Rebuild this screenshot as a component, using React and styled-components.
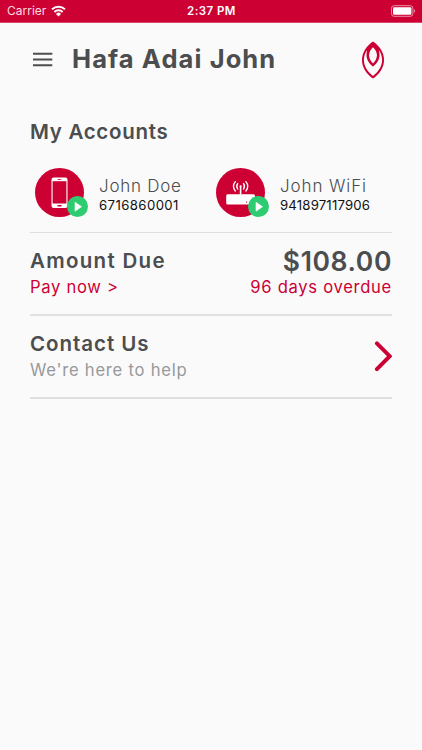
import React from 'react';
import styled, { createGlobalStyle } from 'styled-components';

const GlobalStyle = createGlobalStyle`
    * {
        box-sizing: border-box;
    }
    body {
        margin: 0;
        background-color: #fafafa;
        font-family: Inter, 'Liberation Sans', sans-serif;
        color: #4b4d4f;
    }
`;

const Screen = styled.div`
    min-height: 750px;
    background-color: #fafafa;
`;

const StatusBar = styled.div`
    display: grid;
    grid-template-columns: 1fr auto 1fr;
    align-items: center;
    height: 23px;
    padding: 0 6px 0 7px;
    background-color: #cc0033;
    border-bottom: 1px solid #d6476a;
    color: #fff;
    font-size: 12px;
    line-height: 22px;
`;

const Carrier = styled.div`
    display: flex;
    align-items: center;
    gap: 5px;
    color: #f9dce3;
`;

const Clock = styled.div`
    font-weight: 600;
    font-size: 11.5px;
    letter-spacing: 0.45px;
`;

const Battery = styled.div`
    display: flex;
    justify-content: flex-end;
`;

const Header = styled.header`
    display: flex;
    align-items: center;
    height: 72px;
    padding: 1px 37px 0 33px;
`;

const MenuButton = styled.button`
    display: flex;
    padding: 0;
    margin: 0 19px 0 0;
    border: none;
    background: none;
`;

const Title = styled.h1`
    flex: 1;
    margin: 0 0 1px;
    font-size: 25.5px;
    font-weight: 700;
    line-height: 32px;
    letter-spacing: 1.1px;
    white-space: nowrap;
`;

const Content = styled.main`
    padding: 24px 30px 0;
`;

const Heading = styled.h2`
    margin: 0;
    font-size: 20.5px;
    font-weight: 600;
    line-height: 26px;
    letter-spacing: ${(props) => props.$spacing || '0.7px'};
    white-space: nowrap;
`;

const Accounts = styled.div`
    display: grid;
    grid-template-columns: 181px 181px;
    padding: 23px 0 15px 5px;
    border-bottom: 1px solid #dedede;
`;

const Account = styled.div`
    display: flex;
    align-items: center;
    height: 49px;
`;

const Avatar = styled.div`
    position: relative;
    display: flex;
    width: 49px;
    height: 49px;
    margin-right: 15px;
    border-radius: 50%;
    background-color: #cc0033;
`;

const Badge = styled.svg`
    position: absolute;
    left: 32px;
    top: 28px;
`;

const AccountText = styled.div`
    padding-top: 5px;
    white-space: nowrap;
`;

const AccountName = styled.div`
    font-size: 17px;
    font-weight: 300;
    line-height: 20px;
    letter-spacing: ${(props) => props.$spacing};
`;

const AccountNumber = styled.div`
    color: #111;
    font-size: 13.2px;
    line-height: 18px;
    letter-spacing: ${(props) => props.$spacing};
`;

const Section = styled.section`
    display: flex;
    justify-content: space-between;
    align-items: center;
    height: 83px;
    border-bottom: 2px solid #e0e0e1;
`;

const Side = styled.div`
    text-align: ${(props) => (props.$right ? 'right' : 'left')};
`;

const Amount = styled.div`
    font-size: 26.5px;
    font-weight: 600;
    line-height: 26px;
    letter-spacing: 0.6px;
`;

const Note = styled.div`
    color: ${(props) => props.$color};
    font-size: 16.6px;
    line-height: 26px;
    letter-spacing: ${(props) => props.$spacing || '0.7px'};
    white-space: nowrap;
`;

const WifiIcon = () => (
  <svg width="15" height="12" viewBox="0 0 15 12" fill="none" stroke="#fff" strokeWidth="2">
    <path d="M1 4.4a9.2 9.2 0 0 1 13 0" />
    <path d="M3.4 7a5.8 5.8 0 0 1 8.2 0" />
    <path d="M7.5 11.4L5 8.9a3.5 3.5 0 0 1 5 0z" fill="#fff" stroke="none" />
  </svg>
);

const BatteryIcon = () => (
  <svg width="25" height="12" viewBox="0 0 25 12">
    <rect x="0.5" y="0.7" width="21.4" height="10.6" rx="2.6" fill="none" stroke="#ea91a7" />
    <rect x="2" y="2.2" width="18.4" height="7.6" rx="1.3" fill="#fff" />
    <path d="M23 4.2c1.6.6 1.6 3 0 3.6z" fill="#ea91a7" />
  </svg>
);

const MenuIcon = () => (
  <svg width="20" height="15" viewBox="0 0 20 15" stroke="#4b4d4f" strokeWidth="1.9">
    <path d="M0 1.7h19.3M0 7.5h19.3M0 13.2h19.3" />
  </svg>
);

// outer flame, the gap between the rings, then the inner drop
const Logo = () => (
  <svg width="24" height="38" viewBox="0 0 24 38">
    <path
      d="M12 .5C18 4.500 23 11 23 19C23 27 18 33.500 12 37.500C6 33.500 1 27 1 19C1 11 6 4.500 12 .5z"
      fill="#cc0033"
    />
    <path
      d="M6.200 9C4 12 2.900 15.500 2.900 19C2.900 26 7.500 31.600 12 35C16.500 31.600 21.100 26 21.100 19C21.100 15.500 20 12 17.800 9C18.300 10.700 18.500 12.300 18.500 14C18.500 18.900 15.700 22.900 12 25.500C8.300 22.900 5.500 18.900 5.500 14C5.500 12.300 5.700 10.700 6.200 9z"
      fill="#fafafa"
    />
    <path
      d="M12 6.200C9.800 8.200 8.100 11 8.100 14.200C8.100 17.600 9.800 20.400 12 22.400C14.200 20.400 15.900 17.600 15.900 14.200C15.900 11 14.200 8.200 12 6.200z"
      fill="#fafafa"
    />
  </svg>
);

const PhoneIcon = () => (
  <svg width="49" height="49" viewBox="0 0 49 49">
    <rect x="16.500" y="9.500" width="16" height="30.500" rx="2.200" fill="#fff" />
    <rect x="17.600" y="13.200" width="13.800" height="22.300" fill="#cc0033" />
    <rect x="22.500" y="11" width="4" height="0.800" rx="0.400" fill="#cc0033" />
    <rect x="22.300" y="37" width="4.400" height="1.500" rx="0.700" fill="#cc0033" />
  </svg>
);

const RouterIcon = () => (
  <svg width="49" height="49" viewBox="0 0 49 49">
    <rect x="10.200" y="26.300" width="28.800" height="10.200" rx="1.500" fill="#fff" />
    <path d="M24.600 18.500v8" stroke="#fff" strokeWidth="1.600" />
    <circle cx="24.600" cy="18.300" r="1.100" fill="#fff" />
    <g fill="none" stroke="#fff" strokeWidth="1.300" strokeLinecap="round">
      <path d="M21.700 15.500q-2 2.800 0 5.600M27.500 15.500q2 2.800 0 5.600" />
      <path d="M19.300 13.600q-3.800 4.700 0 9.400M29.900 13.600q3.800 4.700 0 9.400" />
    </g>
    <circle cx="30.600" cy="34.100" r="0.700" fill="#cc0033" />
  </svg>
);

const PlayBadge = () => (
  <Badge width="21" height="21" viewBox="0 0 21 21">
    <circle cx="10.500" cy="10.500" r="10.500" fill="#2ecc71" />
    <path d="M8 6.200L14.500 10.700L8 15.200z" fill="#fff" stroke="#fff" strokeWidth="0.600" strokeLinejoin="round" />
  </Badge>
);

const ChevronIcon = () => (
  <svg width="18" height="31" viewBox="0 0 18 31">
    <path d="M2.900 2.300L15.700 15.200L2.900 28.200" fill="none" stroke="#cc0033" strokeWidth="3.900" strokeLinecap="round" />
  </svg>
);

const accounts = [
  { name: 'John Doe', number: '6716860001', icon: <PhoneIcon />, nameSpacing: '0.75px', numberSpacing: '0.4px' },
  { name: 'John WiFi', number: '941897117906', icon: <RouterIcon />, nameSpacing: '0.9px', numberSpacing: '0.17px' },
];

const App = () => {
  return (
    <Screen>
      <GlobalStyle />
      <StatusBar>
        <Carrier>
          Carrier
          <WifiIcon />
        </Carrier>
        <Clock>2:37 PM</Clock>
        <Battery>
          <BatteryIcon />
        </Battery>
      </StatusBar>
      <Header>
        <MenuButton aria-label="Menu">
          <MenuIcon />
        </MenuButton>
        <Title>Hafa Adai John</Title>
        <Logo />
      </Header>
      <Content>
        <Heading>My Accounts</Heading>
        <Accounts>
          {accounts.map((account) => (
            <Account key={account.number}>
              <Avatar>
                {account.icon}
                <PlayBadge />
              </Avatar>
              <AccountText>
                <AccountName $spacing={account.nameSpacing}>{account.name}</AccountName>
                <AccountNumber $spacing={account.numberSpacing}>{account.number}</AccountNumber>
              </AccountText>
            </Account>
          ))}
        </Accounts>
        <Section>
          <Side>
            <Heading $spacing="1.3px">Amount Due</Heading>
            <Note $color="#cc0033">Pay now &gt;</Note>
          </Side>
          <Side $right>
            <Amount>$108.00</Amount>
            <Note $color="#cc0033">96 days overdue</Note>
          </Side>
        </Section>
        <Section>
          <Side>
            <Heading $spacing="0.95px">Contact Us</Heading>
            <Note $color="#97999b" $spacing="0.77px">We're here to help</Note>
          </Side>
          <ChevronIcon />
        </Section>
      </Content>
    </Screen>
  );
};

export default App;
